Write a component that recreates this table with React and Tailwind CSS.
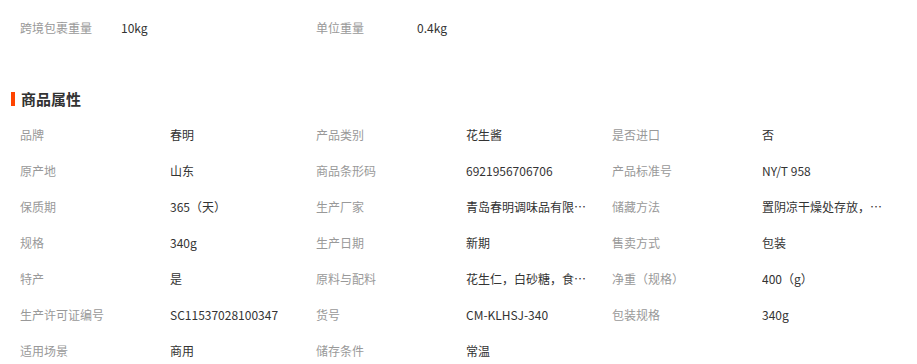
import React from 'react';

const attrs = [
  ['品牌', '春明', '产品类别', '花生酱', '是否进口', '否'],
  ['原产地', '山东', '商品条形码', '6921956706706', '产品标准号', 'NY/T 958'],
  ['保质期', '365（天）', '生产厂家', '青岛春明调味品有限公司', '储藏方法', '置阴凉干燥处存放，避免阳光直射'],
  ['规格', '340g', '生产日期', '新期', '售卖方式', '包装'],
  ['特产', '是', '原料与配料', '花生仁，白砂糖，食用盐', '净重（规格）', '400（g）'],
  ['生产许可证编号', 'SC11537028100347', '货号', 'CM-KLHSJ-340', '包装规格', '340g'],
  ['适用场景', '商用', '储存条件', '常温'],
];

const Cell = ({ label, value }) => (
  <div className="flex w-[296px] items-center">
    <span className="w-[150px] shrink-0 text-[#999]">{label}</span>
    <span className="block max-w-[124px] truncate text-[#333]">{value}</span>
  </div>
);

const App = () => {
  return (
    <div
      className="h-[364px] w-[917px] overflow-hidden bg-white text-[12px] leading-[36px]"
      style={{ fontFamily: '"Noto Sans CJK SC", "Liberation Sans", sans-serif' }}
    >
      {/* 物流信息 */}
      <div className="flex pl-5 pt-[10px]">
        <div className="flex w-[296px]">
          <span className="w-[101px] text-[#999]">跨境包裹重量</span>
          <span className="text-[#333]">10kg</span>
        </div>
        <div className="flex w-[296px]">
          <span className="w-[101px] text-[#999]">单位重量</span>
          <span className="text-[#333]">0.4kg</span>
        </div>
      </div>

      {/* 商品属性 */}
      <div className="mt-[43px] flex items-center pl-[11px]">
        <span className="h-[14px] w-[4px] bg-[#ff4400]" />
        <span className="ml-[6px] text-[15px] font-bold leading-[20px] text-[#333]">商品属性</span>
      </div>

      <div className="pl-5 pt-[8px]">
        {attrs.map((row, i) => (
          <div key={i} className="flex h-[36px]">
            {[0, 2, 4].map((j) =>
              row[j] ? <Cell key={j} label={row[j]} value={row[j + 1]} /> : null
            )}
          </div>
        ))}
      </div>
    </div>
  );
};

export default App;
